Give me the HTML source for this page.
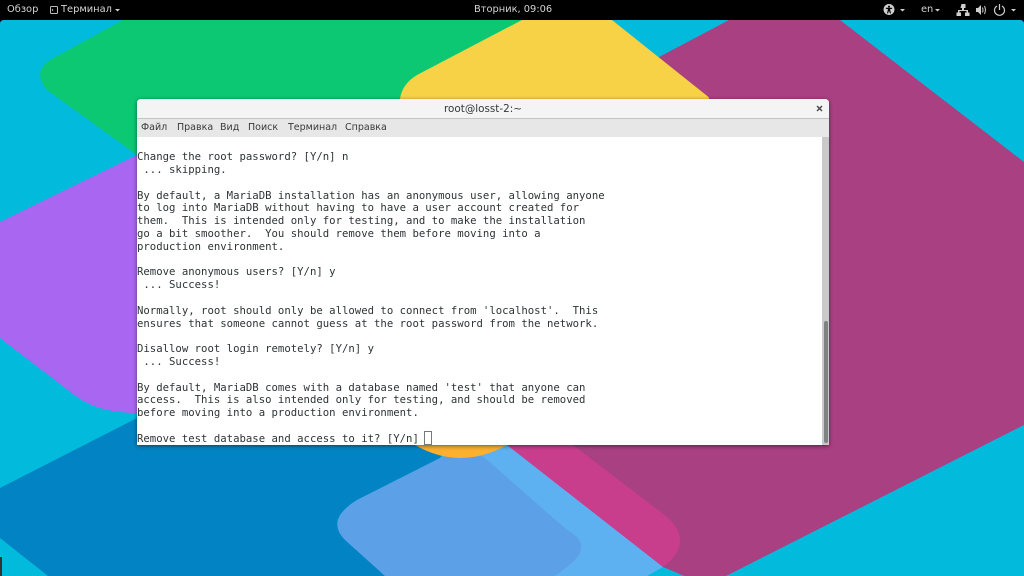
<!DOCTYPE html>
<html><head><meta charset="utf-8"><style>
html,body{margin:0;padding:0;width:1024px;height:576px;overflow:hidden;background:#02bbdc}
*{box-sizing:border-box}
.s{position:absolute;white-space:nowrap;font-family:"DejaVu Sans","Liberation Sans",sans-serif;filter:blur(.3px)}
#bar{position:absolute;left:0;top:0;width:1024px;height:20px;background:#000}
#bar .s{color:#d4d4d4;font-size:9.85px;line-height:20.5px;top:0}
#win{position:absolute;left:137px;top:99px;width:692px;height:346px;background:#fff;border-radius:4px 4px 0 0;box-shadow:0 1px 4px rgba(0,0,0,.5)}
#tb{position:absolute;left:0;top:0;width:692px;height:20px;background:#f4f4f4;border-bottom:1px solid #c4c4c4;border-radius:4px 4px 0 0}
#mb{position:absolute;left:0;top:20px;width:692px;height:18px;background:#e7e7e7}
#mb .s{top:0;line-height:18.6px;font-size:9.5px;color:#3a3a3a}
pre{position:absolute;left:0;top:52.2px;margin:0;font-family:"DejaVu Sans Mono","Liberation Mono",monospace;font-size:10.65px;line-height:12.8px;color:#2e3436;filter:blur(.3px)}
#tr{position:absolute;left:685px;top:38px;width:7px;height:308px;background:#c9c9c9}
#th{position:absolute;left:687px;top:222px;width:4px;height:122px;background:#7f8282;border-radius:2px}
#cur{position:absolute;left:287px;top:332px;width:8px;height:14px;border:1px solid #777}
</style></head><body>
<svg width="1024" height="576" viewBox="0 0 1024 576" style="position:absolute;left:0;top:0">
<rect width="1024" height="576" fill="#02bbdc"/>
<path d="M123,20 L50,60 Q32,72 47,90 L137,155 L300,250 L420,200 L560,20 Z" fill="#0cc873"/>
<path d="M0,222 L137,155 L300,200 V413 H137 Q100,413 77,397 L0,338 Z" fill="#a966f0"/>
<path d="M729,20 H840 L1024,162 V425 L728,575 Q705,585 682,575 L663,567 L500,440 V300 L659,57 Z" fill="#a94082"/>
<path d="M522,20 L417,75 Q402,84 400,99 L400,130 H720 L708.5,97 L612,20 Z" fill="#f8d246"/>
<path d="M0,488 L137,418 L300,400 L460,430 L440,458 L357,500 Q325,520 345,538 L385,576 H48 L0,538 Z" fill="#0284c4"/>
<path d="M485,440 H507 L663,567 L647,576 H500 L440,458 Z" fill="#5eb1f0"/>
<path d="M440,458 L357,500 Q325,520 345,540 L385,576 H555 L568,566 Q595,545 567,530 L485,458 L460,445 Z" fill="#5ca0e8"/>
<path d="M507,445 H573 L667,517 Q695,543 663,567 Z" fill="#c93d8d"/>
<path d="M410,440 H512 L507,445 Q460,471 415,445 Z" fill="#fbb02f"/>
<rect x="0" y="557" width="2" height="19" fill="#333"/>
</svg>
<div id="bar">
<span class="s" style="left:7px">Обзор</span>
<svg style="position:absolute;left:50px;top:6px" width="8" height="8" viewBox="0 0 8 8"><rect x=".5" y=".5" width="7" height="7" rx="1" fill="none" stroke="#bdbdbd"/><path d="M2,3 L3,4 L2,5" fill="none" stroke="#cfcfcf" stroke-width=".7"/></svg>
<span class="s" style="left:61px">Терминал</span>
<span class="s" style="left:474px">Вторник, 09:06</span>
<span class="s" style="left:921px">en</span>
<svg width="1024" height="20" style="position:absolute;left:0;top:0" viewBox="0 0 1024 20">
<g fill="#cfcfcf">
<path d="M115,9 h5 l-2.5,2.5 Z M900,9 h5 l-2.5,2.5 Z M935,9 h5 l-2.5,2.5 Z M1011,9 h5 l-2.5,2.5 Z"/>
<path fill-rule="evenodd" d="M889,4 a5.5,5.5 0 1 0 .01,0 Z M889,5.6 a1,1 0 1 1 -.01,0 Z M885.8,7.8 L892.2,7.8 L892.2,8.8 L890,9.2 L891,13.2 L890,13.5 L889,10.8 L888,13.5 L887,13.2 L888,9.2 L885.8,8.8 Z"/>
<path d="M961.5,4 h4 v4 h-1.5 v2 h4 v2.5 h1.5 v3.5 h-4.5 v-3.5 h1.5 v-1.5 h-7 v1.5 h1.5 v3.5 h-4.5 v-3.5 h1.5 v-2.5 h4 v-2 h-1.5 Z"/>
<path d="M976,8 h2 l3,-3 v10 l-3,-3 h-2 Z"/>
</g>
<path d="M982.5,7.5 q1,2.5 0,5 M984.5,6 q1.8,4 0,8" fill="none" stroke="#cfcfcf" stroke-width="1"/>
<path d="M997,6 a5,5 0 1 0 5,0 M999.5,4 v6" fill="none" stroke="#cfcfcf" stroke-width="1.2"/>
</svg>
</div>
<svg width="1024" height="4" style="position:absolute;left:0;top:20px" viewBox="0 0 1024 4"><path d="M0,0 H4 Q0,0 0,4 Z M1024,0 H1020 Q1024,0 1024,4 Z" fill="#000"/></svg>
<div id="win">
<div id="tb"><span class="s" style="left:307px;top:0;line-height:20px;font-size:10.4px;color:#33393b">root@losst-2:~</span>
<svg style="position:absolute;left:679px;top:6px" width="7" height="7" viewBox="0 0 7 7"><path d="M1,1 L6,6 M6,1 L1,6" stroke="#444" stroke-width="1.4"/></svg></div>
<div id="mb">
<span class="s" style="left:4px">Файл</span>
<span class="s" style="left:40px">Правка</span>
<span class="s" style="left:83px">Вид</span>
<span class="s" style="left:111px">Поиск</span>
<span class="s" style="left:151px">Терминал</span>
<span class="s" style="left:208px">Справка</span>
</div>
<pre>Change the root password? [Y/n] n
 ... skipping.

By default, a MariaDB installation has an anonymous user, allowing anyone
to log into MariaDB without having to have a user account created for
them.  This is intended only for testing, and to make the installation
go a bit smoother.  You should remove them before moving into a
production environment.

Remove anonymous users? [Y/n] y
 ... Success!

Normally, root should only be allowed to connect from 'localhost'.  This
ensures that someone cannot guess at the root password from the network.

Disallow root login remotely? [Y/n] y
 ... Success!

By default, MariaDB comes with a database named 'test' that anyone can
access.  This is also intended only for testing, and should be removed
before moving into a production environment.

Remove test database and access to it? [Y/n] </pre>
<div id="cur"></div>
<div id="tr"></div><div id="th"></div>
</div>
</body></html>
